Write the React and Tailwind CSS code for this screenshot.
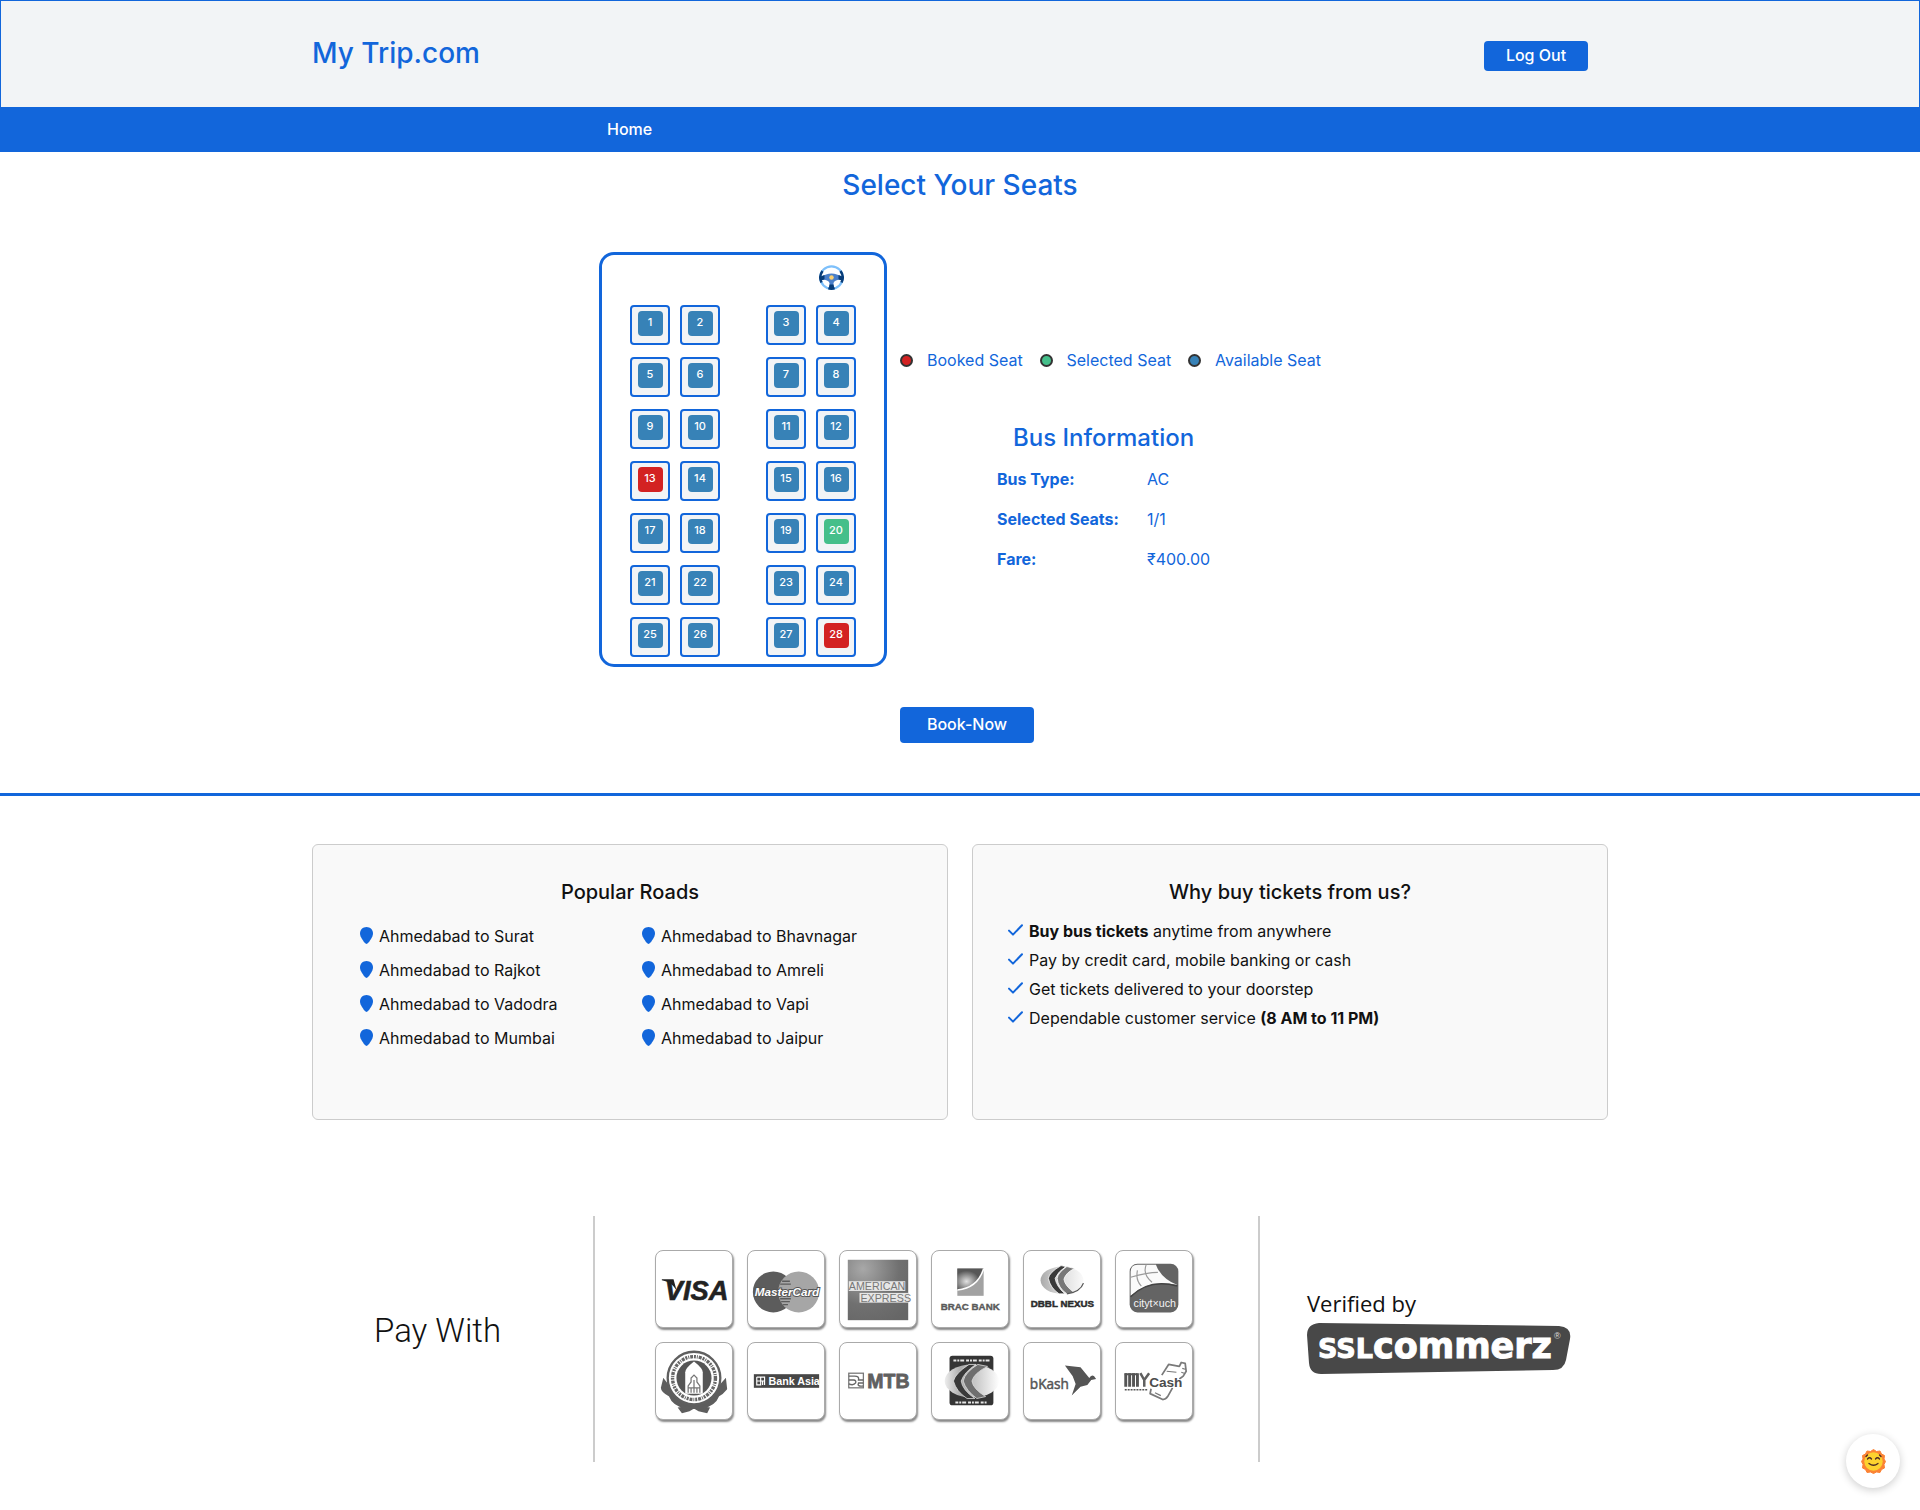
import React, { useState } from "react";

const BOOKED = [13, 28];
const ROWS = [0, 1, 2, 3, 4, 5, 6];

const ROADS = [
  ["Surat", "Rajkot", "Vadodra", "Mumbai"],
  ["Bhavnagar", "Amreli", "Vapi", "Jaipur"],
];

const LEGEND = [
  { label: "Booked Seat", color: "bg-[#d32222]" },
  { label: "Selected Seat", color: "bg-[#45bf8a]" },
  { label: "Available Seat", color: "bg-[#3782b7]" },
];

function SteeringWheel() {
  return (
    <svg viewBox="0 0 50 50" className="size-[25px]" aria-hidden="true">
      <circle cx="25" cy="25" r="22.500" fill="none" stroke="#7ec0fb" strokeWidth="4.500" />
      <path d="M7 12 A22.500 22.500 0 0 0 5 35" fill="none" stroke="#083c78" strokeWidth="5" />
      <path d="M43 12 A22.500 22.500 0 0 1 45 35" fill="none" stroke="#083c78" strokeWidth="5" />
      <path d="M19 46.500 A22.500 22.500 0 0 0 31 46.500" fill="none" stroke="#083c78" strokeWidth="5" />
      <path d="M4 24 Q14 17 25 17 Q36 17 46 24 L45 29 Q31 29 29 36 V44 H21 V36 Q19 29 5 29 Z" fill="#4a7fc9" />
      <path d="M3 23 L11 20 V29 L4 31 Z M47 23 L39 20 V29 L46 31 Z M21 39 H29 L31 48 H19 Z" fill="#083c78" />
      <circle cx="25" cy="25" r="4.500" fill="#fbd070" />
    </svg>
  );
}

function Seat({ number, selected, onSelect }) {
  const booked = BOOKED.includes(number);
  const color = booked ? "bg-[#d32222]" : selected ? "bg-[#45bf8a]" : "bg-[#3782b7]";
  return (
    <button
      type="button"
      disabled={booked}
      aria-pressed={selected}
      onClick={() => onSelect(number)}
      className="flex size-10 justify-center rounded border-2 border-[#1266db] bg-[#f2f4f6] pt-1"
    >
      <span className={`block size-[25px] rounded text-[11px] leading-[22px] font-medium text-white ${color}`}>
        {number}
      </span>
    </button>
  );
}

function Pin() {
  return (
    <svg viewBox="0 0 13 17" className="mb-[2px] h-[17px] w-[13px]" aria-hidden="true">
      <path d="M6.5 0 C10.2 0 13 2.8 13 6.4 C13 9.6 9.6 14.4 7.4 16.6 Q6.5 17.4 5.6 16.6 C3.4 14.4 0 9.6 0 6.4 C0 2.8 2.8 0 6.5 0 Z" fill="#1266db" />
    </svg>
  );
}

function Check() {
  return (
    <svg viewBox="0 0 15 12" className="mb-[2px] h-3 w-[15px]" fill="none" stroke="#1266db" strokeWidth="2" strokeLinecap="round" strokeLinejoin="round" aria-hidden="true">
      <path d="M1 6.6 L5 10.6 L14 1.2" />
    </svg>
  );
}

const SANS = "'Liberation Sans', sans-serif";

function Visa() {
  return (
    <>
      <text x="9" y="50" fontFamily={SANS} fontSize="28" fontWeight="700" fontStyle="italic" fill="#222" stroke="#222" strokeWidth="0.6">VISA</text>
      <path d="M6 29 H18 L21 40 Q16 32 6 30 Z" fill="#222" />
    </>
  );
}

function MasterCard() {
  return (
    <>
      <circle cx="26" cy="42" r="21" fill="#5c5c5c" />
      <circle cx="52" cy="42" r="21" fill="#a6a6a6" />
      <path d="M35 31 H43 M33 34 H44 M33 49 H44 M34 52 H43 M36 55 H41" stroke="#5c5c5c" strokeWidth="1.4" />
      <text x="7" y="46" fontFamily={SANS} fontSize="12" fontWeight="700" fontStyle="italic" fill="#fff" stroke="#555" strokeWidth="2" paintOrder="stroke">MasterCard</text>
    </>
  );
}

function Amex() {
  return (
    <>
      <defs>
        <radialGradient id="amex" cx="0.25" cy="0.15" r="1">
          <stop offset="0" stopColor="#a8a8a8" />
          <stop offset="0.6" stopColor="#707070" />
          <stop offset="1" stopColor="#666" />
        </radialGradient>
      </defs>
      <rect x="8" y="9" width="62" height="62" fill="url(#amex)" />
      <rect x="9" y="31" width="58" height="10" fill="#e6e6e6" />
      <rect x="20" y="43" width="50" height="10" fill="#e6e6e6" />
      <text x="9" y="40" fontFamily={SANS} fontSize="11" fill="#777">AMERICAN</text>
      <text x="21" y="52" fontFamily={SANS} fontSize="11" fill="#777">EXPRESS</text>
    </>
  );
}

function Brac() {
  return (
    <>
      <defs>
        <radialGradient id="brac" cx="0.35" cy="0.6" r="0.5">
          <stop offset="0" stopColor="#e2e2e2" />
          <stop offset="1" stopColor="#575757" />
        </radialGradient>
      </defs>
      <rect x="26" y="18" width="27" height="28" fill="#a2a2a2" />
      <path d="M26 18 H53 Q48 38 26 40 Z" fill="url(#brac)" />
      <path d="M26 40 Q47 38 53 18" fill="none" stroke="#fff" strokeWidth="1.6" />
      <text x="9" y="61" fontFamily={SANS} fontSize="10" fontWeight="700" fill="#5a5a5a" stroke="#5a5a5a" strokeWidth="0.4">BRAC BANK</text>
    </>
  );
}

function Dbbl() {
  return (
    <>
      <defs>
        <linearGradient id="dbbl" x1="0" x2="1">
          <stop offset="0" stopColor="#aaa" />
          <stop offset="0.5" stopColor="#ddd" />
          <stop offset="1" stopColor="#fafafa" />
        </linearGradient>
      </defs>
      <ellipse cx="39" cy="30" rx="22" ry="14" fill="url(#dbbl)" />
      <path d="M38 15 Q26 22 25 28 Q27 38 36 44 H42 Q33 36 32 28 Q35 21 43 16 Z" fill="#3a3a3a" stroke="#fff" strokeWidth="0.8" />
      <path d="M44 16 Q35 22 34 28 Q35 38 44 44 L52 43 Q42 36 41 29 Q43 22 52 18 Z" fill="#777" stroke="#fff" strokeWidth="0.8" />
      <path d="M61 33 Q58 42 44 44" fill="none" stroke="#555" strokeWidth="1.3" />
      <text x="7" y="57" fontFamily={SANS} fontSize="10" fontWeight="700" fill="#2b2b2b" stroke="#2b2b2b" strokeWidth="0.5">DBBL NEXUS</text>
    </>
  );
}

function CityTouch() {
  return (
    <>
      <rect x="14" y="13" width="50" height="50" rx="8" fill="#646464" />
      <path d="M15 44 V22 Q15 14 22 14 H41 Q46 28 63 35 Q34 28 15 46 Z" fill="#fafafa" />
      <path d="M15 27 Q32 22 43 22 M31 14 Q27 24 37 32 M22 20 Q20 30 26 36" fill="none" stroke="#9a9a9a" strokeWidth="1.2" />
      <path d="M15 47 Q34 28 63 36" fill="none" stroke="#444" strokeWidth="1.6" />
      <text x="18" y="57" fontFamily={SANS} fontSize="11" fill="#f4f4f4">cityt×uch</text>
    </>
  );
}

function Islami() {
  return (
    <>
      <path d="M8 38 L14 46 Q20 64 39 64 Q58 64 64 46 L71 38 L72 47 Q68 52 64 54 Q60 64 48 66 L54 67 L52 71 L44 69 L39 66 L34 69 L27 71 L24 67 L30 66 Q18 64 14 54 Q6 50 6 46 Z" fill="#5e5e5e" stroke="#5e5e5e" strokeWidth="2" />
      <circle cx="39" cy="36" r="27" fill="#fff" stroke="#5f5f5f" strokeWidth="2.400" />
      <circle cx="39" cy="36" r="22" fill="none" stroke="#666" strokeWidth="3.500" strokeDasharray="3 1 2 1 1 1" />
      <circle cx="39" cy="36" r="18" fill="#565656" />
      <path d="M30 52 V30 Q30 26 39 19 Q48 26 48 30 V52 Z" fill="#fff" />
      <path d="M33 51 V44 L36 40 V36 L39 33 L42 36 V40 L45 44 V51 M36 51 V46 M39 51 V38 M42 51 V46 M33 46 H45" fill="none" stroke="#777" strokeWidth="1.300" />
    </>
  );
}

function BankAsia() {
  return (
    <>
      <rect x="6" y="32" width="67" height="14" fill="#474747" />
      <path d="M9 35 H17 V43 M9 35 V43 H13 V35 M9 39 H17 M15 43 V39" fill="none" stroke="#fff" strokeWidth="1.2" />
      <text x="21" y="43" fontFamily={SANS} fontSize="11" fontWeight="700" fill="#fff">Bank Asia</text>
    </>
  );
}

function Mtb() {
  return (
    <>
      <rect x="9" y="31" width="15" height="15" fill="#fff" stroke="#777" strokeWidth="1.300" />
      <path d="M9 34 H15 Q20 34 19 38 H24 M9 38 H14 Q17 38 16 41 Q14 44 9 42 M24 41 H19 Q17 45 24 44" fill="none" stroke="#666" strokeWidth="1.400" />
      <text x="28" y="46" fontFamily={SANS} fontSize="20" fontWeight="700" fill="#606060" stroke="#606060" strokeWidth="0.800">MTB</text>
    </>
  );
}

function DbblMobile() {
  return (
    <>
      <defs>
        <linearGradient id="mobile" x1="0" x2="1">
          <stop offset="0" stopColor="#eee" />
          <stop offset="0.3" stopColor="#aaa" />
          <stop offset="0.6" stopColor="#ccc" />
          <stop offset="1" stopColor="#fff" />
        </linearGradient>
      </defs>
      <rect x="18" y="13" width="45" height="51" rx="3" fill="#353535" />
      <path d="M22 18 H59 M24 61 H57" stroke="#e6e6e6" strokeWidth="2" strokeDasharray="3 1 2 1 4 2" />
      <ellipse cx="41" cy="39" rx="28" ry="17" fill="url(#mobile)" />
      <path d="M38 22 Q24 31 22 39 Q25 50 36 57 H44 Q31 48 30 39 Q33 30 45 22 Z" fill="#3a3a3a" stroke="#ddd" strokeWidth="0.800" />
      <path d="M47 22 Q34 30 32 39 Q35 49 46 57 L55 55 Q42 47 41 39 Q43 31 57 24 Z" fill="#6e6e6e" stroke="#ddd" strokeWidth="0.800" />
    </>
  );
}

function Bkash() {
  return (
    <>
      <text x="6" y="47" fontFamily="'Open Sans', sans-serif" fontSize="14" fill="#555" stroke="#555" strokeWidth="0.5">bKash</text>
      <path d="M42 23 L58 25 L67 36 Q69 32 72 34 L74 37 L69 38 L65 43 L58 45 L49 54 L53 42 L50 34 Z" fill="#555" />
    </>
  );
}

function MyCash() {
  return (
    <>
      <path d="M47 33 L54 22 L65 24 L67 20 L71 21 L72 29 L69 34 L65 37 M36 47 L35 52 L48 58 Q51 58 53 55 L58 46" fill="none" stroke="#7a7a7a" strokeWidth="1.800" strokeLinejoin="round" />
      <path d="M40 51 L46 54 M68 26 L71 27 M67 30 L70 31 M52 29 L62 30" stroke="#777" strokeWidth="1.200" />
      <path d="M10 31 V45 M14 31 V45 M18 31 V45 M22 31 V45" stroke="#555" strokeWidth="3" />
      <path d="M9 32 H22" stroke="#555" strokeWidth="2" />
      <path d="M25 31 L29 38 L34 31 M29 38 V45" fill="none" stroke="#606060" strokeWidth="2.600" />
      <path d="M9 48 H33" stroke="#555" strokeWidth="1.600" strokeDasharray="2 1" />
      <text x="34" y="45" fontFamily={SANS} fontSize="14" fontWeight="700" fill="#4c4c4c" stroke="#fff" strokeWidth="1.500" paintOrder="stroke">Cash</text>
    </>
  );
}

const PAYMENTS = [
  ["Visa", Visa],
  ["MasterCard", MasterCard],
  ["American Express", Amex],
  ["BRAC Bank", Brac],
  ["DBBL Nexus", Dbbl],
  ["citytouch", CityTouch],
  ["Islami Bank", Islami],
  ["Bank Asia", BankAsia],
  ["MTB", Mtb],
  ["DBBL Mobile Banking", DbblMobile],
  ["bKash", Bkash],
  ["MYCash", MyCash],
];

function SslCommerz() {
  return (
    <svg viewBox="0 0 264 52" className="h-[52px] w-[264px]" role="img" aria-label="SSLCommerz">
      <path d="M12 0 L252 3 Q265 4 263 16 L259 37 Q257 47 246 47 L14 51 Q3 51 2 40 L0 12 Q0 1 12 0 Z" fill="#484848" />
      <text x="11" y="35" fontFamily="'DejaVu Sans', sans-serif" fontWeight="700" fill="#fff" stroke="#fff" strokeWidth="1">
        <tspan fontSize="27">SSL</tspan>
        <tspan fontSize="35">commerz</tspan>
      </text>
      <text x="247" y="16" fontFamily={SANS} fontSize="9" fill="#ddd">®</text>
    </svg>
  );
}

function Sun() {
  return (
    <svg viewBox="0 0 50 50" className="size-[25px]" aria-hidden="true">
      <path d="M25 1 L31 5 L38 4 L41 10 L47 13 L46 20 L49 25 L46 31 L47 38 L41 41 L38 47 L31 46 L25 49 L19 46 L12 47 L9 41 L3 38 L4 31 L1 25 L4 20 L3 13 L9 10 L12 4 L19 5 Z" fill="#fb8334" stroke="#fb8334" strokeWidth="2" strokeLinejoin="round" />
      <circle cx="25" cy="25" r="18.500" fill="#fcd22f" />
      <g fill="none" stroke="#4a2b24" strokeWidth="2.600" strokeLinecap="round">
        <path d="M13 20 Q17 15 21 20 M29 20 Q33 15 37 20 M16 29 Q25 36 34 29" />
        <path d="M10 15 L13 12 M40 15 L37 12" />
      </g>
    </svg>
  );
}

export default function App() {
  const [selected, setSelected] = useState(20);

  return (
    <div className="min-h-screen bg-white font-['Inter','Noto_Sans',sans-serif] text-base leading-6 text-[#111]">
      <header className="border border-[#1266db] bg-[#f2f4f6]">
        <div className="mx-auto flex h-[106px] max-w-[1320px] items-start justify-between px-3">
          <a href="#home" className="pt-[31px] text-[28px] leading-[42px] font-medium text-[#1266db]">
            My Trip.com
          </a>
          <button type="button" className="mt-10 mr-5 h-[30px] w-[104px] rounded bg-[#1266db] pb-[2px] font-medium text-white">
            Log Out
          </button>
        </div>
      </header>
      <nav className="bg-[#1266db]">
        <div className="mx-auto flex h-11 max-w-[722px] items-center px-2 pb-[2px]">
          <a href="#home" className="font-medium text-white">Home</a>
        </div>
      </nav>

      <main className="border-b-3 border-[#1266db] pt-3 pb-[50px] text-[#1266db]">
        <h1 className="text-center text-[28px] leading-[42px] font-medium">Select Your Seats</h1>
        <div className="mt-[46px] grid grid-cols-[288px_421px] justify-center gap-x-[13px] gap-y-10">
          <div className="rounded-[15px] border-3 border-[#1266db] px-7 pb-[7px]">
            <div className="flex h-[50px] justify-end pt-[10px] pr-3">
              <SteeringWheel />
            </div>
            <div className="flex flex-col gap-3">
              {ROWS.map((row) => (
                <div key={row} className="flex justify-between">
                  {[1, 3].map((first) => (
                    <div key={first} className="flex gap-[10px]">
                      {[0, 1].map((offset) => {
                        const number = row * 4 + first + offset;
                        return <Seat key={number} number={number} selected={selected === number} onSelect={setSelected} />;
                      })}
                    </div>
                  ))}
                </div>
              ))}
            </div>
          </div>

          <div className="pt-24">
            <ul className="flex justify-between">
              {LEGEND.map((item) => (
                <li key={item.label} className="flex items-center gap-[14px]">
                  <span className={`size-[13px] rounded-full border-2 border-[#333] ${item.color}`} />
                  {item.label}
                </li>
              ))}
            </ul>
            <section className="mt-12 ml-[97px]">
              <h2 className="ml-4 text-2xl leading-9 font-medium">Bus Information</h2>
              <table className="mt-[3px] text-left">
                <tbody>
                  <tr className="h-10">
                    <th scope="row" className="w-[150px] font-bold">Bus Type:</th>
                    <td>AC</td>
                  </tr>
                  <tr className="h-10">
                    <th scope="row" className="font-bold">Selected Seats:</th>
                    <td>1/1</td>
                  </tr>
                  <tr className="h-10">
                    <th scope="row" className="font-bold">Fare:</th>
                    <td>₹400.00</td>
                  </tr>
                </tbody>
              </table>
            </section>
          </div>

          <button type="button" className="col-start-2 h-9 w-[134px] rounded bg-[#1266db] pb-[2px] font-medium text-white">
            Book-Now
          </button>
        </div>
      </main>

      <div className="mx-auto grid max-w-[1320px] grid-cols-2 gap-6 px-3 pt-12">
        <section className="h-[276px] rounded-md border border-[#ccc] bg-[#f9f9f9] px-[47px] pt-8">
          <h2 className="text-center text-xl leading-[30px] font-medium">Popular Roads</h2>
          <div className="mt-3 grid grid-cols-[282px_1fr]">
            {ROADS.map((cities) => (
              <ul key={cities[0]}>
                {cities.map((city) => (
                  <li key={city} className="flex h-[34px] items-center gap-[6px]">
                    <Pin />
                    Ahmedabad to {city}
                  </li>
                ))}
              </ul>
            ))}
          </div>
        </section>
        <section className="h-[276px] rounded-md border border-[#ccc] bg-[#f9f9f9] px-[35px] pt-8">
          <h2 className="text-center text-xl leading-[30px] font-medium">Why buy tickets from us?</h2>
          <ul className="mt-[9px]">
            <li className="flex h-[29px] items-center gap-[6px]">
              <Check />
              <span><b>Buy bus tickets</b> anytime from anywhere</span>
            </li>
            <li className="flex h-[29px] items-center gap-[6px]">
              <Check />
              <span>Pay by credit card, mobile banking or cash</span>
            </li>
            <li className="flex h-[29px] items-center gap-[6px]">
              <Check />
              <span>Get tickets delivered to your doorstep</span>
            </li>
            <li className="flex h-[29px] items-center gap-[6px]">
              <Check />
              <span>Dependable customer service <b>(8 AM to 11 PM)</b></span>
            </li>
          </ul>
        </section>
      </div>

      <footer className="mx-auto mt-24 mb-12 grid h-[246px] max-w-[1320px] grid-cols-[281px_667px_1fr] px-3">
        <div className="flex items-center pl-[62px] font-['Roboto',sans-serif] text-[33px] font-light">
          <span className="pb-4">Pay With</span>
        </div>
        <ul className="grid grid-cols-[repeat(6,78px)] content-center justify-center gap-[14px] border-x-2 border-[#ccc] pr-[6px] pb-2">
          {PAYMENTS.map(([name, Logo]) => (
            <li key={name}>
              <svg viewBox="0 0 78 78" role="img" aria-label={name} className="size-[78px] rounded-lg border border-[#aaa] bg-white shadow-[1px_2px_2px_#888]">
                <Logo />
              </svg>
            </li>
          ))}
        </ul>
        <div className="flex flex-col justify-center pb-4 pl-[47px]">
          <p className="font-['Open_Sans',sans-serif] text-[22px] leading-8">Verified by</p>
          <div className="mt-1"><SslCommerz /></div>
        </div>
      </footer>

      <button type="button" aria-label="Toggle theme" className="fixed right-5 bottom-[22px] flex size-[54px] items-center justify-center rounded-full bg-white shadow-[0_2px_8px_rgba(0,0,0,0.2)]">
        <Sun />
      </button>
    </div>
  );
}
